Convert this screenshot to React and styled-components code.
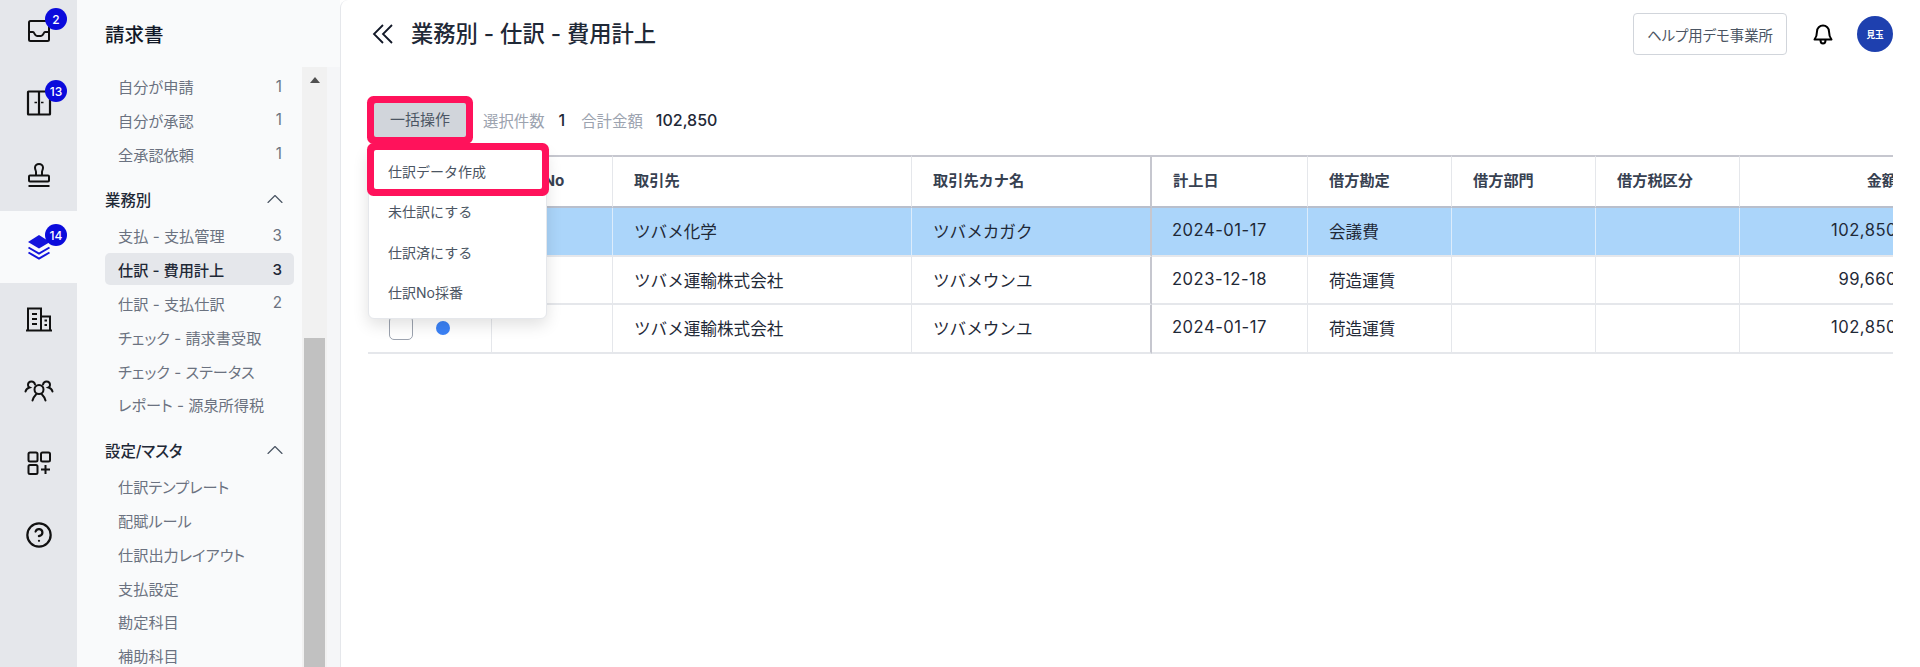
import React from "react";
import styled, { createGlobalStyle } from "styled-components";
import { CircleHelp, ChevronUp } from "lucide-react";

const Global = createGlobalStyle`
  html, body { margin: 0; padding: 0; height: 100%; background: #fff; }
  #root { height: 100%; }
  * { box-sizing: border-box; }
  body { font-family: Inter, "Noto Sans CJK JP", sans-serif; color: #1f2937; }
`;

const Page = styled.div`
  display: flex;
  height: 667px;
  overflow: hidden;
`;

const Rail = styled.nav`
  width: 77px;
  flex: none;
  background: #e5e7eb;
`;
const RailList = styled.div`
  margin-top: -5px;
  display: flex;
  flex-direction: column;
`;
const RailItem = styled.div`
  position: relative;
  height: 72px;
  display: flex;
  align-items: center;
  justify-content: center;
  background: ${(p) => (p.$active ? "#f9fafb" : "transparent")};
  color: #111;
`;
const Badge = styled.span`
  position: absolute;
  left: 45px;
  top: 13px;
  width: 22px;
  height: 22px;
  border-radius: 50%;
  background: #0b0bdc;
  color: #fff;
  font-size: 12px;
  font-weight: 500;
  display: flex;
  align-items: center;
  justify-content: center;
`;

const Sidebar = styled.aside`
  width: 263px;
  flex: none;
  background: #f9fafb;
  display: flex;
  flex-direction: column;
`;
const SideTitle = styled.h2`
  margin: 0;
  height: 67px;
  flex: none;
  padding-left: 28px;
  display: flex;
  align-items: center;
  font-size: 19.5px;
  font-weight: 500;
  color: #111827;
`;
const SideBody = styled.div`
  flex: 1;
  min-height: 0;
  display: flex;
  padding-right: 14px;
  background: linear-gradient(to right, #f9fafb 250px, #f5f6f8 250px);
`;
const NavList = styled.div`
  width: 225px;
  flex: none;
  padding: 2px 0 0 28px;
  overflow: hidden;
  display: flex;
  flex-direction: column;
`;
const NavRow = styled.div`
  flex: none;
  width: 189px;
  height: 32px;
  margin: 1px 0 0.8px;
  padding: 0 12px 0 13px;
  border-radius: 5px;
  display: flex;
  align-items: center;
  justify-content: space-between;
  font-size: 15.2px;
  font-feature-settings: "palt";
  white-space: nowrap;
  color: ${(p) => (p.$active ? "#1f2937" : "#6b7280")};
  font-weight: ${(p) => (p.$active ? 500 : 400)};
  background: ${(p) => (p.$active ? "#e5e7eb" : "transparent")};
`;
const GroupHead = styled.div`
  flex: none;
  width: 189px;
  height: 34px;
  margin: 12px 0 2px;
  padding-right: 5px;
  display: flex;
  align-items: center;
  justify-content: space-between;
  font-size: 15.4px;
  font-weight: 500;
  font-feature-settings: "palt";
  color: #1f2937;
`;
const ScrollTrack = styled.div`
  width: 25px;
  flex: none;
  background: #f1f1f1;
  display: flex;
  flex-direction: column;
  align-items: center;
  padding: 0 2px;
`;
const ScrollArrow = styled.div`
  flex: none;
  height: 271px;
  width: 100%;
  padding-top: 10px;
  display: flex;
  justify-content: center;
  &::before {
    content: "";
    width: 0;
    height: 0;
    border-left: 5.5px solid transparent;
    border-right: 5.5px solid transparent;
    border-bottom: 6px solid #505050;
  }
`;
const ScrollThumb = styled.div`
  flex: 1;
  width: 100%;
  background: #c1c1c1;
`;

const Main = styled.main`
  flex: 1;
  min-width: 0;
  padding: 0 27px;
  background: #fff;
  border-left: 1px solid #e5e7eb;
  border-top-left-radius: 8px;
`;
const TopBar = styled.header`
  height: 68px;
  padding-left: 4px;
  display: flex;
  align-items: center;
  color: #111827;
`;
const PageTitle = styled.h1`
  margin: 0 0 5px 18px;
  flex: 1;
  font-size: 22.3px;
  font-weight: 500;
  color: #1f2937;
`;
const OfficeButton = styled.button`
  height: 42px;
  width: 154px;
  padding: 0;
  background: #fff;
  border: 1px solid #d1d5db;
  border-radius: 4px;
  font: inherit;
  font-size: 14.4px;
  font-feature-settings: "palt";
  color: #4b5563;
`;
const BellWrap = styled.div`
  margin-left: 26px;
  display: flex;
  color: #000;
`;
const Avatar = styled.div`
  margin-left: 24px;
  width: 36px;
  height: 36px;
  border-radius: 50%;
  background: #1e40af;
  color: #fff;
  font-size: 8.6px;
  font-weight: 700;
  display: flex;
  align-items: center;
  justify-content: center;
`;

const Toolbar = styled.div`
  position: relative;
  margin-top: 35px;
  padding-left: 6px;
  height: 34px;
  display: flex;
  align-items: center;
  font-size: 15px;
`;
const BulkButton = styled.button`
  position: relative;
  z-index: 3;
  width: 92px;
  height: 34px;
  padding: 0 0 4px;
  border: 0;
  border-radius: 2px;
  background: #d1d5db;
  color: #4b5563;
  font: inherit;
  box-shadow: 0 0 0 7px #ff125b;
`;
const StatLabel = styled.span`
  margin-left: ${(p) => p.$gap}px;
  font-size: 15.4px;
  color: #9ca3af;
`;
const StatValue = styled.span`
  margin-left: ${(p) => p.$gap}px;
  font-size: 16px;
  font-weight: 500;
  color: #1f2937;
`;

const Menu = styled.div`
  position: absolute;
  z-index: 2;
  left: 0;
  top: 45px;
  width: 179px;
  height: 171px;
  padding-top: 2px;
  background: #fff;
  border: 1px solid #e5e7eb;
  border-radius: 6px;
  box-shadow: 0 6px 16px rgba(0, 0, 0, 0.12);
`;
const MenuItem = styled.div`
  height: 40.3px;
  padding-left: 19px;
  display: flex;
  align-items: center;
  font-size: 14px;
  color: #4b5563;
`;
const MenuMark = styled.div`
  position: absolute;
  left: 5px;
  right: 4px;
  top: 1px;
  height: 39px;
  border-radius: 2px;
  box-shadow: 0 0 0 7px #ff125b;
`;

const TableClip = styled.div`
  margin-top: 18px;
  width: 1525px;
  overflow: hidden;
`;
const Table = styled.table`
  width: 1551px;
  table-layout: fixed;
  border-collapse: separate;
  border-spacing: 0;
`;
const Th = styled.th`
  height: 53px;
  padding: 0 21px 5px;
  text-align: ${(p) => (p.$right ? "right" : "left")};
  font-size: 15.2px;
  font-weight: 700;
  color: #374151;
  border-top: 2px solid #c6c7cf;
  border-bottom: 2px solid #b9bfcc;
  border-right: ${(p) => (p.$pin ? "2px solid #c6c7cf" : "1px solid #e5e7eb")};
  white-space: nowrap;
`;
const Row = styled.tr`
  background: ${(p) => (p.$selected ? "#abd5fa" : "#fff")};
  &:nth-child(2) td { height: 48px; }
`;
const Td = styled.td`
  height: 49px;
  padding: 0 21px ${(p) => (p.$num ? "3px" : "1px")};
  padding-left: ${(p) => (p.$num && !p.$right ? "20px" : "21px")};
  text-align: ${(p) => (p.$right ? "right" : "left")};
  font-size: 16.6px;
  letter-spacing: ${(p) => (p.$num ? "0.03em" : "0")};
  color: #1f2937;
  border-bottom: 2px solid #e5e7eb;
  border-right: ${(p) =>
    p.$pin
      ? "2px solid #c6c7cf"
      : p.$selected
      ? "1px solid #dcecfb"
      : "1px solid #e5e7eb"};
  white-space: nowrap;
`;
const Tick = styled.div`
  display: flex;
  align-items: center;
  gap: 23px;
`;
const CheckBox = styled.span`
  width: 24px;
  height: 24px;
  border: 1.5px solid #9ca3af;
  border-radius: 5px;
  background: #fff;
`;
const Dot = styled.span`
  width: 14px;
  height: 14px;
  border-radius: 50%;
  background: #3b82f6;
`;

const InboxIcon = () => (
  <svg width="24" height="24" viewBox="0 0 24 24" fill="none" stroke="currentColor" strokeWidth="2" strokeLinejoin="round">
    <rect x="2" y="2" width="20" height="20" rx="1.5" />
    <path d="M2 13h4c1.5 0 1.5 4 4 4h4c2.500 0 2.500-4 4-4h4" />
  </svg>
);
const DoorIcon = () => (
  <svg width="26" height="26" viewBox="0 0 26 26" fill="none" stroke="currentColor" strokeWidth="2.2">
    <rect x="2" y="1.500" width="22" height="23" rx="0.5" />
    <path d="M8.500 12.500h2.500M15 12.500h2.500" strokeWidth="1.4" />
    <path d="M13 1.500v23" />
  </svg>
);
const StampIcon = () => (
  <svg width="24" height="25" viewBox="0 0 24 25" fill="none" stroke="currentColor" strokeWidth="2" strokeLinejoin="round">
    <path d="M15 12.500V9c0-1.500 1-2.200 1-4.500a4 3.500 0 0 0-8 0C8 6.800 9 7.500 9 9v3.500" />
    <rect x="2" y="12.500" width="20" height="6" rx="1" />
    <path d="M1.500 23h21" />
  </svg>
);
const LayersIcon = () => (
  <svg width="24" height="26" viewBox="0 0 24 26" fill="none" stroke="#1414dc" strokeWidth="2">
    <path d="M12 1 L23 8 L12 14.500 L1 8 Z" fill="#1414dc" stroke="none" />
    <path d="M1.500 13.500 L12 19.500 L22.500 13.500" />
    <path d="M1.500 18.500 L12 24.500 L22.500 18.500" />
  </svg>
);
const BuildingIcon = () => (
  <svg width="28" height="25" viewBox="0 0 28 25" fill="none" stroke="currentColor" strokeWidth="2">
    <path d="M1 23.500h26" />
    <path d="M3 23.500V1.500h13v22" />
    <path d="M16 9.500h9v14" />
    <path d="M7 7h5M7 12h5M7 17h5M19.500 13.500h2.500M19.500 18h2.500" />
  </svg>
);
const UsersIcon = () => (
  <svg width="30" height="22" viewBox="0 0 30 22" fill="none" stroke="currentColor" strokeWidth="2" strokeLinecap="round">
    <circle cx="15" cy="9.500" r="4.500" />
    <path d="M8.500 20.500c.8-3 3-5.500 3.500-6M21.500 20.500c-.8-3-3-5.500-3.500-6" />
    <path d="M11 4.500C10.500 2.500 9 1.500 7.500 1.500 5.500 1.500 4 3 4 5c0 1 .5 2 1.500 2.500C3.500 8 2 9.500 1.500 11.500" />
    <path d="M19 4.500c.5-2 2-3 3.500-3 2 0 3.500 1.500 3.500 3.500 0 1-.5 2-1.500 2.500 2 .5 3.500 2 4 4" />
  </svg>
);
const AppsIcon = () => (
  <svg width="24" height="24" viewBox="0 0 24 24" fill="none" stroke="currentColor" strokeWidth="2">
    <rect x="1.500" y="1.500" width="9" height="9" rx="1.500" />
    <rect x="14" y="1.500" width="9" height="9" rx="1.500" />
    <rect x="1.500" y="14" width="9" height="9" rx="1.500" />
    <path d="M18.500 14v9M14 18.500h9" />
  </svg>
);
const BellIcon = () => (
  <svg width="20" height="22" viewBox="0 0 20 22" fill="none" stroke="currentColor" strokeWidth="2" strokeLinejoin="round">
    <path d="M4 8.500a6 6 0 0 1 12 0c0 4 1 6 2.500 8h-17C3 14.500 4 12.500 4 8.500Z" />
    <path d="M7.500 17c0 2 1 3.500 2.500 3.500s2.500-1.500 2.500-3.500" />
  </svg>
);
const BackIcon = () => (
  <svg width="21" height="22" viewBox="0 0 21 22" fill="none" stroke="currentColor" strokeWidth="1.800">
    <path d="M11 2 L2 11 L11 20" />
    <path d="M20 2 L11 11 L20 20" />
  </svg>
);

const railItems = [
  { icon: <InboxIcon />, badge: 2 },
  { icon: <DoorIcon />, badge: 13 },
  { icon: <StampIcon /> },
  { icon: <LayersIcon />, badge: 14, active: true },
  { icon: <BuildingIcon /> },
  { icon: <UsersIcon /> },
  { icon: <AppsIcon /> },
  { icon: <CircleHelp size={28} strokeWidth={1.9} /> },
];

const rows = [
  { name: "ツバメ化学", kana: "ツバメカガク", date: "2024-01-17", acct: "会議費", amount: "102,850", selected: true },
  { name: "ツバメ運輸株式会社", kana: "ツバメウンユ", date: "2023-12-18", acct: "荷造運賃", amount: "99,660" },
  { name: "ツバメ運輸株式会社", kana: "ツバメウンユ", date: "2024-01-17", acct: "荷造運賃", amount: "102,850" },
];

const widths = [124, 121, 299, 240, 156, 144, 144, 144, 179];

export default function App() {
  return (
    <>
      <Global />
      <Page>
        <Rail>
          <RailList>
            {railItems.map((it, i) => (
              <RailItem key={i} $active={it.active}>
                {it.icon}
                {it.badge && <Badge>{it.badge}</Badge>}
              </RailItem>
            ))}
          </RailList>
        </Rail>
        <Sidebar>
          <SideTitle>請求書</SideTitle>
          <SideBody>
            <NavList>
              <NavRow>自分が申請<span>1</span></NavRow>
              <NavRow>自分が承認<span>1</span></NavRow>
              <NavRow>全承認依頼<span>1</span></NavRow>
              <GroupHead>業務別<ChevronUp size={28} strokeWidth={1} color="#4b5563" /></GroupHead>
              <NavRow>支払 - 支払管理<span>3</span></NavRow>
              <NavRow $active>仕訳 - 費用計上<span>3</span></NavRow>
              <NavRow>仕訳 - 支払仕訳<span>2</span></NavRow>
              <NavRow>チェック - 請求書受取</NavRow>
              <NavRow>チェック - ステータス</NavRow>
              <NavRow>レポート - 源泉所得税</NavRow>
              <GroupHead>設定/マスタ<ChevronUp size={28} strokeWidth={1} color="#4b5563" /></GroupHead>
              <NavRow>仕訳テンプレート</NavRow>
              <NavRow>配賦ルール</NavRow>
              <NavRow>仕訳出力レイアウト</NavRow>
              <NavRow>支払設定</NavRow>
              <NavRow>勘定科目</NavRow>
              <NavRow>補助科目</NavRow>
            </NavList>
            <ScrollTrack>
              <ScrollArrow />
              <ScrollThumb />
            </ScrollTrack>
          </SideBody>
        </Sidebar>
        <Main>
          <TopBar>
            <BackIcon />
            <PageTitle>業務別 - 仕訳 - 費用計上</PageTitle>
            <OfficeButton>ヘルプ用デモ事業所</OfficeButton>
            <BellWrap><BellIcon /></BellWrap>
            <Avatar>見玉</Avatar>
          </TopBar>
          <Toolbar>
            <BulkButton>一括操作</BulkButton>
            <StatLabel $gap={17}>選択件数</StatLabel>
            <StatValue $gap={14}>1</StatValue>
            <StatLabel $gap={16}>合計金額</StatLabel>
            <StatValue $gap={13}>102,850</StatValue>
            <Menu>
              <MenuMark />
              <MenuItem>仕訳データ作成</MenuItem>
              <MenuItem>未仕訳にする</MenuItem>
              <MenuItem>仕訳済にする</MenuItem>
              <MenuItem>仕訳No採番</MenuItem>
            </Menu>
          </Toolbar>
          <TableClip>
            <Table>
              <colgroup>
                {widths.map((w, i) => <col key={i} width={w} />)}
              </colgroup>
              <thead>
                <tr>
                  <Th />
                  <Th>仕訳No</Th>
                  <Th>取引先</Th>
                  <Th $pin>取引先カナ名</Th>
                  <Th>計上日</Th>
                  <Th>借方勘定</Th>
                  <Th>借方部門</Th>
                  <Th>借方税区分</Th>
                  <Th $right>金額</Th>
                </tr>
              </thead>
              <tbody>
                {rows.map((r, i) => (
                  <Row key={i} $selected={r.selected}>
                    <Td $selected={r.selected}>
                      <Tick><CheckBox /><Dot /></Tick>
                    </Td>
                    <Td $selected={r.selected} />
                    <Td $selected={r.selected}>{r.name}</Td>
                    <Td $selected={r.selected} $pin>{r.kana}</Td>
                    <Td $selected={r.selected} $num>{r.date}</Td>
                    <Td $selected={r.selected}>{r.acct}</Td>
                    <Td $selected={r.selected} />
                    <Td $selected={r.selected} />
                    <Td $selected={r.selected} $num $right>{r.amount}</Td>
                  </Row>
                ))}
              </tbody>
            </Table>
          </TableClip>
        </Main>
      </Page>
    </>
  );
}
